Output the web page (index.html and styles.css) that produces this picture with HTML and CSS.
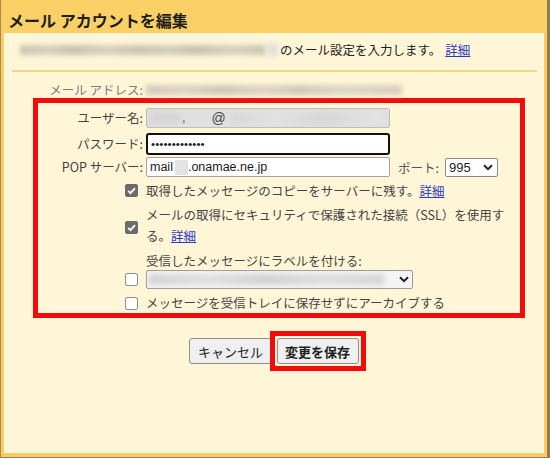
FILE: index.html
```html
<!DOCTYPE html>
<html lang="ja">
<head>
<meta charset="utf-8">
<link rel="stylesheet" href="styles.css">
</head>
<body>
<div class="dialog">
  <div class="header"><h1 class="title">メール アカウントを編集</h1></div>
  <div class="body">
    <div class="intro">
      <span class="blur blur-intro"></span><span class="blur blur-intro-end"></span>
      <span class="intro-text">のメール設定を入力します。</span><a class="link intro-link" href="#">詳細</a>
    </div>
    <div class="sep"></div>
    <div class="form">
      <div class="row email-row">
        <span class="label muted">メール アドレス:</span>
        <span class="blur blur-email"></span>
      </div>
      <div class="highlight">
        <div class="row field-row">
          <span class="label">ユーザー名:</span>
          <div class="input input-user"><span class="blur blur-user"></span><span class="comma">,</span><span class="at">@</span><span class="blur blur-user2"></span></div>
        </div>
        <div class="row field-row">
          <span class="label">パスワード:</span>
          <div class="input input-pass">•••••••••••••</div>
        </div>
        <div class="row field-row">
          <span class="label">POP サーバー:</span>
          <div class="field-line">
            <div class="input input-pop">mail<span class="redact"></span>.onamae.ne.jp</div>
            <span class="port-label">ポート:</span>
            <div class="select select-port"><span>995</span>
              <svg class="chev" viewBox="0 0 10 7" width="10" height="7"><path d="M1 1.2l4 4 4-4" fill="none" stroke="#222" stroke-width="2"/></svg>
            </div>
          </div>
        </div>
        <div class="row cb-row row-a">
          <span class="cb checked"><svg viewBox="0 0 13 13" width="13" height="13"><path d="M3.2 6.8l2.3 2.3 4.5-5" fill="none" stroke="#fff" stroke-width="1.8"/></svg></span>
          <span class="cb-text">取得したメッセージのコピーをサーバーに残す。<a class="link" href="#">詳細</a></span>
        </div>
        <div class="row cb-row row-b">
          <span class="cb checked"><svg viewBox="0 0 13 13" width="13" height="13"><path d="M3.2 6.8l2.3 2.3 4.5-5" fill="none" stroke="#fff" stroke-width="1.8"/></svg></span>
          <span class="cb-text">メールの取得にセキュリティで保護された接続（SSL）を使用す<br>る。<a class="link" href="#">詳細</a></span>
        </div>
        <div class="row cb-row row-c">
          <span class="cb cb-low"></span>
          <div class="cb-text">
            <div>受信したメッセージにラベルを付ける:</div>
            <div class="select select-label"><span class="blur blur-select"></span>
              <svg class="chev" viewBox="0 0 10 7" width="10" height="7"><path d="M1 1.2l4 4 4-4" fill="none" stroke="#222" stroke-width="2"/></svg>
            </div>
          </div>
        </div>
        <div class="row cb-row row-d">
          <span class="cb"></span>
          <span class="cb-text">メッセージを受信トレイに保存せずにアーカイブする</span>
        </div>
      </div>
    </div>
    <div class="buttons">
      <button class="btn" type="button">キャンセル</button>
      <button class="btn btn-save" type="button">変更を保存</button>
    </div>
  </div>
</div>
</body>
</html>
```

FILE: styles.css
```css
html, body {
  margin: 0;
  padding: 0;
  background: #fbcf62;
}
body {
  font-family: "Noto Sans CJK JP", "Noto Sans", sans-serif;
  font-size: 12.5px;
  color: #333;
}
.dialog {
  width: 550px;
  height: 458px;
  box-sizing: border-box;
  display: flex;
  flex-direction: column;
  background: #f9cd62;
  border-left: 1px solid #a58e55;
  border-right: 3px solid #8e7d4e;
  border-bottom: 1px solid #8e7d4e;
}
.header {
  height: 33px;
  flex: none;
  display: flex;
  align-items: center;
  padding-top: 6px;
  box-sizing: border-box;
  background: #fbd066;
}
.title {
  margin: 0 0 0 7px;
  font-size: 16px;
  line-height: 20px;
  font-weight: bold;
  color: #1e1e1e;
}
.body {
  flex: 1;
  margin: 0 3px 4px 3px;
  background: #fff5d7;
  border: 1px solid #fff9e6;
  border-top: none;
  display: flex;
  flex-direction: column;
}
.intro {
  display: flex;
  align-items: center;
  height: 21px;
  margin: 6px 0 0 15px;
  color: #222;
}
.blur {
  display: inline-block;
  filter: blur(2.4px);
}
.blur-intro {
  width: 246px;
  height: 10px;
  background: linear-gradient(90deg, #cdc5b3 0%, #d6cebd 12%, #c8c0ae 22%, #d9d1c0 35%, #cbc3b1 48%, #d4ccbb 60%, #c9c1af 72%, #d8d0bf 86%, #cec6b4 100%);
}
.blur-intro-end {
  width: 12px;
  height: 13px;
  background: #e3e1da;
}
.intro-text {
  margin-left: 2px;
}
.link {
  color: #2a39c4;
  text-decoration: underline;
}
.intro-link {
  margin-left: 4px;
}
.sep {
  height: 2px;
  margin: 10px 6px 0 7px;
  background: #f2d68a;
}
.form {
  margin-left: 28px;
  display: flex;
  flex-direction: column;
}
.row {
  display: grid;
  grid-template-columns: 105px 1fr;
  column-gap: 3px;
  align-items: center;
}
.email-row {
  margin-top: 10px;
  height: 16px;
  padding-left: 5px;
}
.label {
  text-align: right;
  white-space: nowrap;
  color: #444;
  line-height: 16px;
}
.muted {
  color: #7c7c7c;
}
.blur-email {
  width: 256px;
  height: 10px;
  background: linear-gradient(90deg, #d2cab8 0%, #dcd4c3 15%, #cfc7b5 30%, #ddd5c4 45%, #d1c9b7 60%, #dfd7c6 78%, #d6cebc 100%);
}
.highlight {
  width: 492px;
  box-sizing: border-box;
  border: 5px solid #f30a0a;
  padding: 5px 0 0 0;
  display: flex;
  flex-direction: column;
}
.field-row {
  height: 20px;
  margin-bottom: 4.5px;
}
.input {
  box-sizing: border-box;
  width: 244px;
  height: 20px;
  border: 1px solid #a3a3a3;
  border-radius: 2px;
  background: #fff;
  display: flex;
  align-items: center;
  padding-left: 3px;
  font-family: "Liberation Sans", Arial, sans-serif;
  font-size: 12.5px;
  color: #1a1a1a;
  overflow: hidden;
  white-space: nowrap;
}
.input-user {
  background: #e0e0e0;
  border-color: #bdbdbd;
}
.blur-user {
  width: 30px;
  height: 12px;
  background: #d5d5d5;
}
.comma {
  margin-left: 2px;
  color: #444;
}
.at {
  margin-left: 26px;
  font-size: 14px;
  color: #444;
}
.blur-user2 {
  margin-left: 6px;
  width: 150px;
  height: 12px;
  background: linear-gradient(90deg, #d8d8d8, #e2e2e2 30%, #d6d6d6 60%, #e4e4e4);
}
.input-pass {
  border: 2px solid #111;
  border-radius: 3px;
  height: 22px;
  padding-left: 3px;
  font-size: 11.5px;
  letter-spacing: 0.1px;
  color: #222;
}
.field-line {
  display: flex;
  align-items: center;
}
.redact {
  display: inline-block;
  width: 13px;
  height: 15px;
  margin-left: 2px;
  background: #e3e3e3;
}
.port-label {
  margin-left: 8px;
  color: #555;
  white-space: nowrap;
}
.select {
  box-sizing: border-box;
  height: 19px;
  border: 1px solid #8a8a8a;
  border-radius: 2px;
  background: #fff;
  display: flex;
  align-items: center;
  justify-content: space-between;
  font-family: "Liberation Sans", Arial, sans-serif;
  font-size: 13px;
  color: #222;
}
.select-port {
  width: 53px;
  margin-left: 6px;
  padding: 0 4px 0 3px;
}
.chev {
  display: block;
  flex: none;
}
.cb-row {
  align-items: center;
}
.cb {
  justify-self: end;
  margin-right: 5px;
  width: 13px;
  height: 13px;
  box-sizing: border-box;
  border: 1px solid #8d8d8d;
  border-radius: 2px;
  background: #fff;
  display: block;
}
.cb svg {
  display: block;
  margin: -1px;
}
.cb.checked {
  background: #6c6c6c;
  border-color: #6c6c6c;
}
.cb-text {
  line-height: 21px;
  color: #444;
}
.row-a {
  margin-top: -1.5px;
}
.row-b {
  margin-top: 3px;
}
.row-b .cb {
  margin-top: 5px;
}
.row-c {
  margin-top: 4px;
  align-items: end;
}
.cb-low {
  align-self: end;
  margin-bottom: 3px;
}
.select-label {
  width: 267px;
  margin-top: -1px;
  padding: 0 3px 0 2px;
  background: #f4f4f4;
  border-color: #9a9a9a;
}
.blur-select {
  width: 235px;
  height: 11px;
  background: linear-gradient(90deg, #d4d4d4, #e0e0e0 25%, #d2d2d2 50%, #dedede 75%, #d6d6d6);
}
.row-d {
  margin-top: 4px;
  height: 20px;
}
.row-d .cb-text {
  line-height: 20px;
}
.buttons {
  display: flex;
  justify-content: center;
  gap: 5px;
  margin-top: 20px;
}
.btn {
  height: 26px;
  box-sizing: border-box;
  padding: 0 7.5px;
  border: 1px solid #8f8f8f;
  border-radius: 3px;
  background: #efefef;
  font-family: "Noto Sans CJK JP", "Noto Sans", sans-serif;
  font-size: 13px;
  color: #222;
}
.btn-save {
  position: relative;
  font-weight: bold;
}
.btn-save::after {
  content: "";
  position: absolute;
  left: -8px;
  top: -8px;
  right: -8px;
  bottom: -8px;
  border: 5px solid #f30a0a;
  pointer-events: none;
}
```
